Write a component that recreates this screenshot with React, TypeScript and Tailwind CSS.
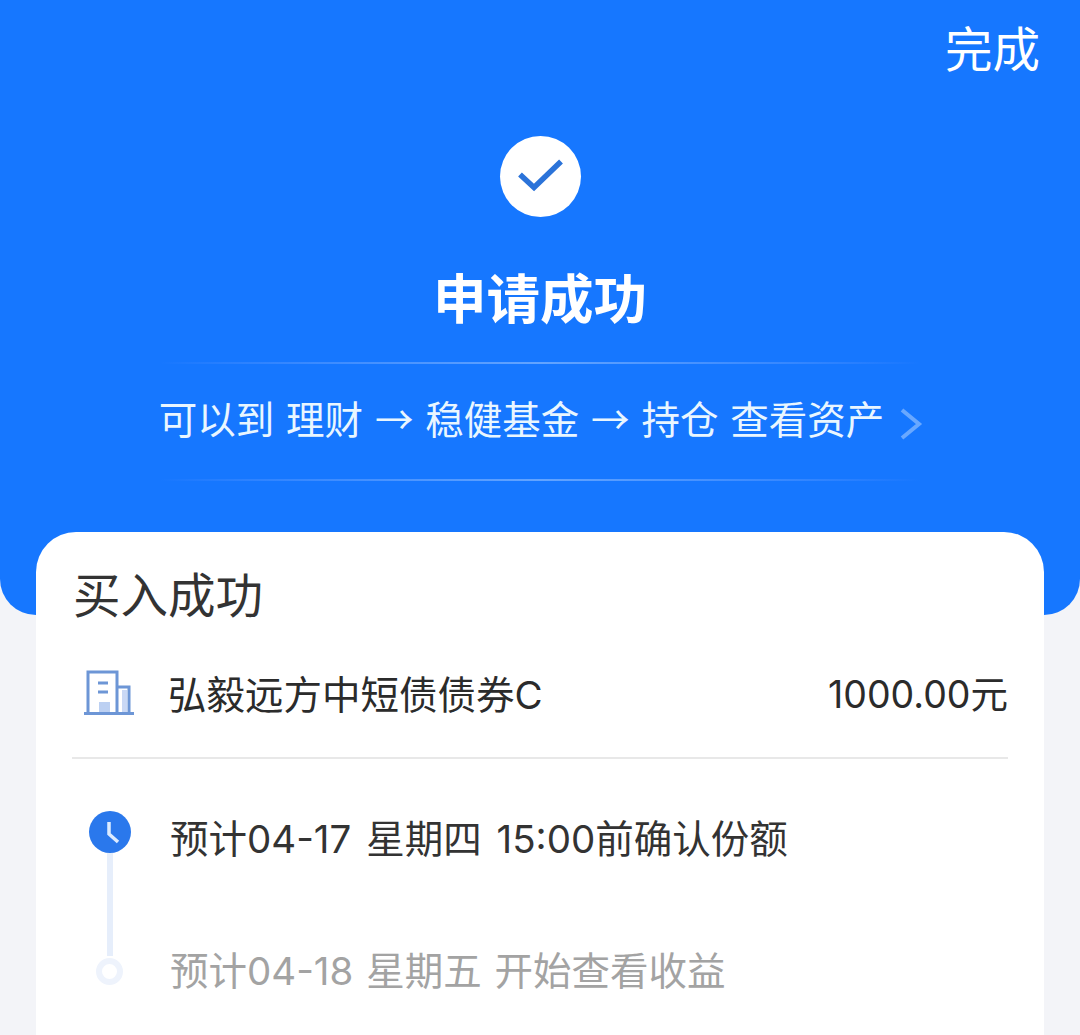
const font = { fontFamily: 'Inter, "Noto Sans CJK SC", "Noto Sans", sans-serif' };

function Divider() {
  return <div className="h-[2px] w-[760px] bg-gradient-to-r from-[#1677ff] via-[#63a4ff] to-[#1677ff]" />;
}

function Arrow() {
  return <span className="font-['Noto_Sans_CJK_SC']">→</span>;
}

export default function App() {
  return (
    <div style={font} className="h-[1035px] w-[1080px] overflow-hidden bg-[#f3f4f8]">
      <div className="flex h-[615px] flex-col items-center rounded-b-[36px] bg-[#1677ff] text-white">
        <div className="flex h-[136px] w-full justify-end pr-[40px] pt-[19px] text-[47.5px] leading-[62px]">完成</div>
        <div className="flex h-[81px] w-[81px] items-center justify-center rounded-full bg-white">
          <svg width="81" height="81" viewBox="0 0 81 81" fill="none">
            <path d="M20 39 L34 52 L61 26" transform="translate(0 -0.5)" stroke="#2b73d9" strokeWidth="5.5" />
          </svg>
        </div>
        <div className="mt-[48px] text-[53.5px] font-bold leading-[70px]">申请成功</div>
        <div className="mt-[27px]"><Divider /></div>
        <div className="flex h-[115px] items-center pl-[2px] text-[38.5px] leading-[50px] text-[#e9f6ff]">
          <span className="-mt-[7px] whitespace-pre [word-spacing:1px]">
            可以到 理财 <Arrow /> 稳健基金 <Arrow /> 持仓 查看资产
          </span>
          <svg className="ml-[15px] mt-[5px]" width="24" height="34" viewBox="0 0 24 34" fill="none">
            <path d="M3 3 L20 17 L3 31" stroke="#69a8ff" strokeWidth="4" />
          </svg>
        </div>
        <Divider />
      </div>

      <div className="mx-[36px] -mt-[83px] h-[600px] rounded-t-[40px] bg-white">
        <div className="pl-[37px] pt-[32px] text-[47.5px] leading-[64px] text-[#333333]">买入成功</div>

        <div className="mx-[36px] mt-[6px] flex h-[125px] items-start border-b-2 border-[#e8e8e8] pt-[36px]">
          <svg className="-mt-[1px] ml-[12px]" width="52" height="46" viewBox="0 0 52 46" fill="none">
            <rect x="15" y="33" width="11" height="11" fill="#bcd0f2" />
            <rect x="38" y="21" width="5" height="23" fill="#c9d8f5" />
            <path d="M4 44 V3 H33 V44 M33 18 H45 V44" stroke="#6d96d6" strokeWidth="3" />
            <path d="M14 14 H24 M14 23 H24" stroke="#6d96d6" strokeWidth="3" />
            <path d="M0 44.5 H50" stroke="#6d96d6" strokeWidth="3" />
          </svg>
          <div className="ml-[32px] flex-1 text-[38.5px] leading-[50px] text-[#2b2b2b]">弘毅远方中短债债券C</div>
          <div className="text-[37.5px] leading-[50px] text-[#2b2b2b]">1000.00元</div>
        </div>

        <div className="flex pl-[52px] pt-[52px]">
          <div className="flex w-[43px] flex-col items-center">
            <div className="flex h-[42px] w-[42px] items-center justify-center rounded-full bg-[#2a78ec]">
              <svg width="42" height="42" viewBox="0 0 42 42" fill="none">
                <path d="M20 11 V23 L29 31" stroke="#dcebff" strokeWidth="3.5" />
              </svg>
            </div>
            <div className="h-[103px] w-[6px] bg-[#e6eefb]" />
            <div className="mt-[2px] h-[27px] w-[27px] rounded-full border-[6px] border-[#eef3fc]" />
          </div>
          <div className="ml-[39px] mt-[3px] text-[38.5px] leading-[50px]">
            <div className="text-[#333333] [word-spacing:4px]">预计04-17 星期四 15:00前确认份额</div>
            <div className="mt-[82px] text-[#a3a3a3] [word-spacing:2px]">预计04-18 星期五 开始查看收益</div>
          </div>
        </div>
      </div>
    </div>
  );
}
